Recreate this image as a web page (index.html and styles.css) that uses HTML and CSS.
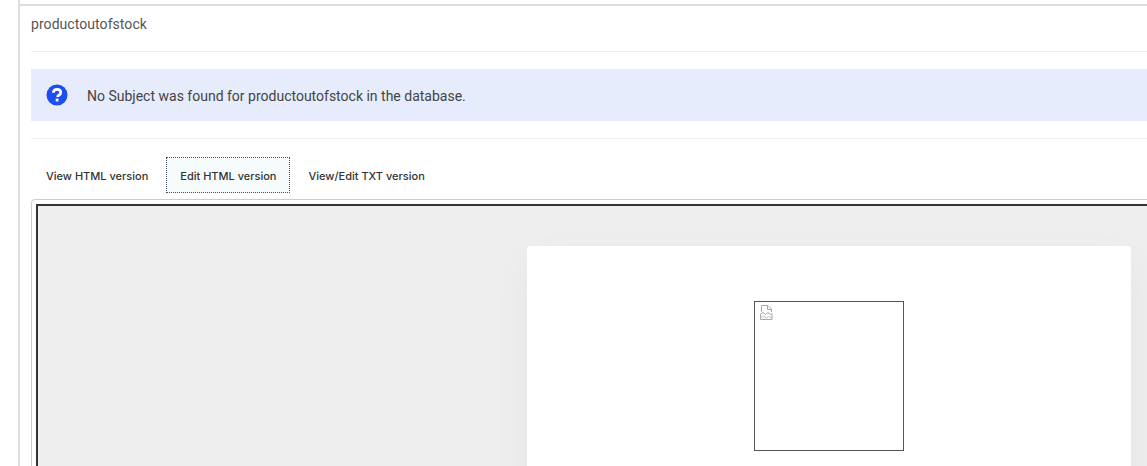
FILE: index.html
```html
<!DOCTYPE html>
<html lang="en">
<head>
	<meta charset="UTF-8" />
	<title>productoutofstock</title>
	<link rel="stylesheet" href="styles.css">
</head>
<body>
	<div class="panel">
		<p class="templateName">productoutofstock</p>
		<div class="notice">
			<svg class="noticeIcon" width="22" height="22" viewBox="0 0 22 22">
				<circle cx="11" cy="11" r="10.5" fill="#1c4ef0" />
				<path d="M7.400 8.800c0-2.200 1.600-3.500 3.700-3.500s3.600 1.300 3.600 3.100c0 1.500-.9 2.200-1.900 2.900-.8.500-1.100.9-1.100 1.700" fill="none" stroke="#fff" stroke-width="2.800" />
				<rect x="9.700" y="14.600" width="2.800" height="2.800" fill="#fff" />
			</svg>
			<span>No Subject was found for productoutofstock in the database.</span>
		</div>
		<ul class="tabs">
			<li><a href="###">View HTML version</a></li>
			<li class="current"><a href="###">Edit HTML version</a></li>
			<li><a href="###">View/Edit TXT version</a></li>
		</ul>
		<div class="editor">
			<div class="preview">
				<div class="mailCard">
					<div class="brokenImg">
						<svg width="13" height="16" viewBox="0 0 13 16">
							<path d="M1.500 7V.5h6.500l3.500 3.500v3M7.500.5v4h4" fill="none" stroke="#aaa" />
							<path d="M.5 9l2.500-1.500 2.500 2 2.500-2 2.500 2 1.500-1v6h-11.500z" fill="none" stroke="#aaa" />
							<path d="M.5 13l3-2 3 2 2-1.500 4 1.500" fill="none" stroke="#bbb" />
						</svg>
					</div>
				</div>
			</div>
		</div>
	</div>
</body>
</html>
```

FILE: styles.css
```css
*{
	margin: 0;padding: 0;
	box-sizing: border-box;
}
html,body{
	height: 100%;
	overflow: hidden;
}
body{
	background: #fff;
	font-family: "Roboto", "Liberation Sans", sans-serif;
	color: #444;
	padding-left: 18px;
}
a{
	color: inherit;
	text-decoration: none;
}
.panel{
	width: 1129px;
	height: 466px;
	overflow: hidden;
	border-left: 2px solid #ddd;
	padding: 4px 0 0 0;
}
.templateName{
	height: 48px;
	margin-right: -100px;
	padding: 10px 0 0 11px;
	font-size: 14px;
	letter-spacing: .06px;
	line-height: 17px;
	color: #555;
	border-top: 2px solid #ddd;
	background: linear-gradient(#eee,#eee) 11px 100% / 100% 1px no-repeat;
}
.notice{
	display: flex;
	align-items: center;
	height: 52px;
	margin: 17px 0 0 11px;
	padding-left: 15px;
	background: #e6ecfb;
	font-size: 14px;
	color: #444;
}
.notice span{
	padding-top: 1px;
}
.noticeIcon{
	margin-right: 19px;
}
.tabs{
	display: flex;
	list-style-type: none;
	margin: 17px 0 0 11px;
	padding-top: 18px;
	border-top: 1px solid #eee;
	font-family: "Inter", "Liberation Sans", sans-serif;
	font-size: 11px;
	font-weight: 500;
	color: #333;
}
.tabs li{
	height: 36px;
	line-height: 38px;
	padding: 0 18px 0 15px;
}
.tabs .current{
	background: #f6fcfb;
	border: 1px dotted #456;
	line-height: 36px;
	padding: 0 13px;
	margin-right: 18px;
}
.tabs .current + li{
	padding-left: 0;
}
.editor{
	width: 1200px;
	margin: 6px 0 0 11px;
	padding: 4px;
	border: 1px solid #ccc;
	border-radius: 4px 0 0 0;
}
.preview{
	height: 400px;
	border: 2px solid #333;
	background: #eee;
	padding: 40px 0 0 489px;
}
.mailCard{
	width: 604px;
	height: 300px;
	padding: 55px 0 0 227px;
	background: #fff;
	border-radius: 3px;
	box-shadow: 0 14px 40px rgba(0,0,0,.04);
}
.brokenImg{
	width: 150px;height: 150px;
	border: 1px solid #555;
	padding: 3px 0 0 5px;
}
.brokenImg svg{
	display: block;
}
```
